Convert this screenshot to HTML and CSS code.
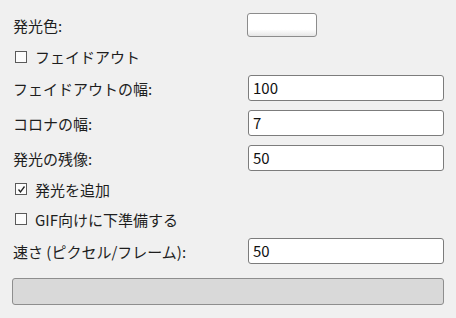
FILE: index.html
```html
<!DOCTYPE html>
<html lang="ja">
<head>
<meta charset="utf-8">
<title>発光</title>
<link rel="stylesheet" href="styles.css">
</head>
<body>
<div class="panel">
  <div class="row row-color">
    <span class="label">発光色:</span>
    <div class="color-btn"></div>
  </div>
  <div class="row row-check first-check">
    <span class="box"></span><span class="label">フェイドアウト</span>
  </div>
  <div class="row row-field">
    <span class="label">フェイドアウトの幅:</span>
    <div class="field">100</div>
  </div>
  <div class="row row-field">
    <span class="label">コロナの幅:</span>
    <div class="field">7</div>
  </div>
  <div class="row row-field">
    <span class="label">発光の残像:</span>
    <div class="field">50</div>
  </div>
  <div class="row row-check check-a">
    <span class="box"><svg width="11" height="11" viewBox="0 0 11 11"><path d="M2.5 5.5 L4.5 8 L8.5 2.5" fill="none" stroke="#222" stroke-width="1.3"/></svg></span><span class="label">発光を追加</span>
  </div>
  <div class="row row-check check-b">
    <span class="box"></span><span class="label">GIF向けに下準備する</span>
  </div>
  <div class="row row-field row-speed">
    <span class="label">速さ (ピクセル/フレーム):</span>
    <div class="field">50</div>
  </div>
  <div class="progress"></div>
</div>
</body>
</html>
```
FILE: styles.css
```css
html, body {
  margin: 0;
  padding: 0;
  background: #f0f0f0;
}
.panel {
  width: 456px;
  height: 318px;
  box-sizing: border-box;
  padding: 12px 12px 0 12px;
  display: flex;
  flex-direction: column;
  font-family: "Noto Sans CJK JP", "DejaVu Sans", sans-serif;
  font-size: 15px;
  color: #1e1e1e;
}
.row {
  display: flex;
  align-items: center;
}
.label {
  line-height: 1;
  padding-left: 1px;
}
.row-color {
  height: 26px;
  justify-content: space-between;
}
.color-btn {
  width: 68px;
  height: 22px;
  margin-right: 127px;
  border: 1px solid #8c8c8c;
  border-radius: 3px;
  background: linear-gradient(to bottom, #ffffff 0%, #ffffff 70%, #e6e6e6 100%);
}
.first-check {
  height: 37px;
}
.row-check .box {
  width: 10px;
  height: 10px;
  border: 1px solid #5a5a5a;
  background: #fcfcfc;
  margin-left: 3px;
  margin-right: 8px;
  display: flex;
  align-items: center;
  justify-content: center;
}
.row-check .box svg {
  display: block;
  margin: -1px;
}
.row-check .label {
  padding-left: 0;
}
.row-field {
  height: 26px;
  justify-content: space-between;
  margin-bottom: 9px;
}
.field {
  width: 190px;
  height: 24px;
  border: 1px solid #7c7c7c;
  border-radius: 3px;
  background: #ffffff;
  padding-left: 4px;
  font-size: 15px;
  line-height: 24px;
  color: #111;
  margin-right: 0;
}
.check-a {
  height: 30px;
  margin-top: -6px;
}
.check-b {
  height: 30px;
}
.row-speed {
  margin-top: 4px;
  margin-bottom: 0;
}
.progress {
  margin-top: 14px;
  height: 25px;
  border: 1px solid #8e8e8e;
  border-radius: 3px;
  background: #d9d9d9;
}
```
